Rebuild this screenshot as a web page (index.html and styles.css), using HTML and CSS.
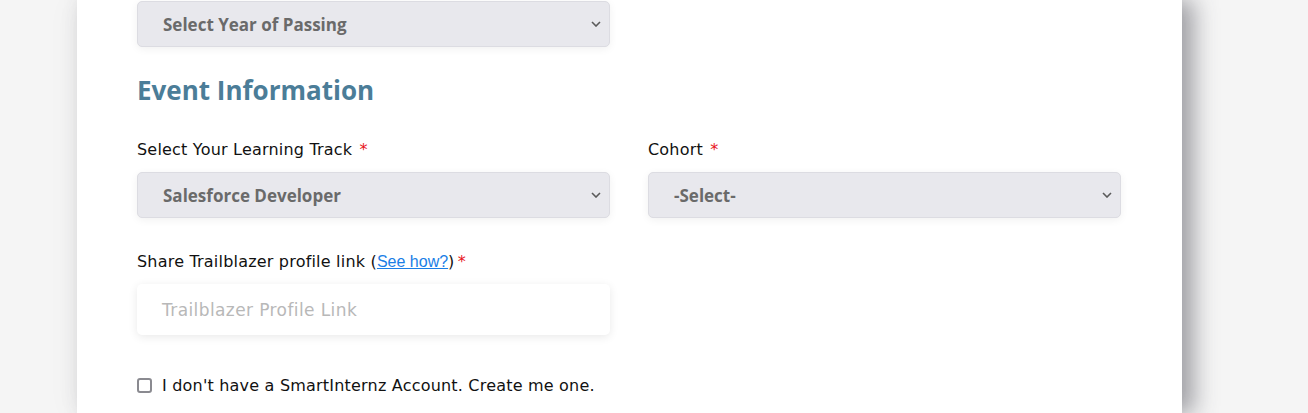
FILE: index.html
```html
<!DOCTYPE html>
<html>
<head>
<meta charset="utf-8">
<link rel="stylesheet" href="styles.css">
</head>
<body>
<div class="page">
  <div class="card">
    <div class="row">
      <div class="col">
        <div class="select"><span>Select Year of Passing</span><svg class="chev" viewBox="0 0 10 6" width="10" height="6"><path d="M1 1 L5 5 L9 1" fill="none" stroke="#5a5a5a" stroke-width="1.6"/></svg></div>
      </div>
    </div>
    <h2 class="heading">Event Information</h2>
    <div class="row">
      <div class="col">
        <label class="label">Select Your Learning Track <span class="req">*</span></label>
        <div class="select"><span>Salesforce Developer</span><svg class="chev" viewBox="0 0 10 6" width="10" height="6"><path d="M1 1 L5 5 L9 1" fill="none" stroke="#5a5a5a" stroke-width="1.6"/></svg></div>
      </div>
      <div class="col">
        <label class="label">Cohort <span class="req">*</span></label>
        <div class="select"><span>-Select-</span><svg class="chev" viewBox="0 0 10 6" width="10" height="6"><path d="M1 1 L5 5 L9 1" fill="none" stroke="#5a5a5a" stroke-width="1.6"/></svg></div>
      </div>
    </div>
    <div class="row row-link">
      <div class="col">
        <label class="label">Share Trailblazer profile link (<a class="link" href="#">See how?</a>) <span class="req req-tight">*</span></label>
        <div class="input">Trailblazer Profile Link</div>
      </div>
    </div>
    <div class="check-row">
      <span class="box"></span>
      <span class="check-text">I don't have a SmartInternz Account. Create me one.</span>
    </div>
  </div>
</div>
</body>
</html>
```
FILE: styles.css
```css
html, body {
  margin: 0;
  padding: 0;
  background: #f5f5f5;
  height: 413px;
  overflow: hidden;
  font-family: "DejaVu Sans", "Open Sans", sans-serif;
}
.page {
  padding-left: 77px;
}
.card {
  width: 985px;
  height: 413px;
  background: #fff;
  padding: 1px 60px 0 60px;
  box-shadow: 12px 0 22px rgba(60, 60, 70, 0.45), -4px 0 30px rgba(0, 0, 0, 0.04);
}
.row {
  display: flex;
  gap: 38px;
}
.col {
  width: 473px;
}
.select {
  height: 44px;
  border: 1px solid #dcdce2;
  border-radius: 5px;
  background: #e8e8ed;
  display: flex;
  align-items: center;
  justify-content: space-between;
  padding: 0 8px 0 25px;
  box-shadow: 0 2px 8px rgba(0, 0, 0, 0.06);
  font-family: "Open Sans", sans-serif;
  font-size: 17px;
  font-weight: 700;
  color: #6a6a6a;
}
.chev {
  display: block;
}
.heading {
  margin: 27px 0 0 0;
  font-family: "Open Sans", sans-serif;
  font-size: 26px;
  line-height: 32px;
  font-weight: 700;
  color: #4b7d98;
}
.heading + .row {
  margin-top: 34px;
}
.label {
  display: block;
  font-size: 16px;
  letter-spacing: 0.2px;
  line-height: 20px;
  color: #111;
  margin-bottom: 12px;
}
.req {
  color: #e8141b;
  margin-left: 2px;
  letter-spacing: 0;
}
.req-tight {
  margin-left: -2px;
}
.row-link {
  margin-top: 34px;
}
.link {
  color: #1a7ee6;
  text-decoration: underline;
  font-family: "Liberation Sans", sans-serif;
  font-size: 16px;
  letter-spacing: 0;
}
.input {
  height: 51px;
  border-radius: 5px;
  background: #fff;
  box-shadow: 0 2px 10px rgba(0, 0, 0, 0.09);
  display: flex;
  align-items: center;
  padding-left: 25px;
  font-size: 17px;
  letter-spacing: 0.4px;
  color: #b8b8b8;
  margin-top: 8px;
}
.check-row {
  display: flex;
  align-items: center;
  gap: 10px;
  margin-top: 41px;
}
.box {
  width: 11px;
  height: 11px;
  border: 2px solid #8a8a90;
  border-radius: 3px;
}
.check-text {
  font-size: 16px;
  letter-spacing: 0.2px;
  color: #111;
}
```
